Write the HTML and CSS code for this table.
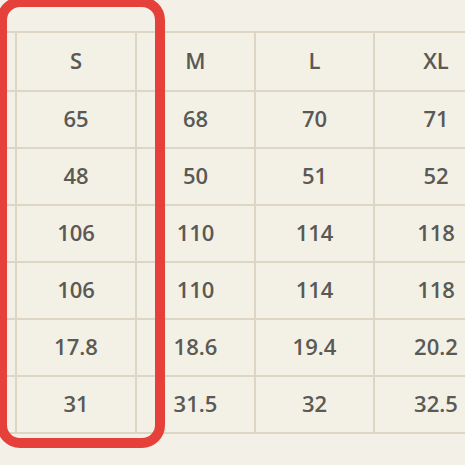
FILE: index.html
```html
<!DOCTYPE html>
<html>
<head>
<meta charset="utf-8">
<link rel="stylesheet" href="styles.css">
</head>
<body>
<div class="page">
  <div class="grid">
    <div class="cell"></div><div class="cell head">S</div><div class="cell head">M</div><div class="cell head">L</div><div class="cell head">XL</div>
    <div class="cell"></div><div class="cell">65</div><div class="cell">68</div><div class="cell">70</div><div class="cell">71</div>
    <div class="cell"></div><div class="cell">48</div><div class="cell">50</div><div class="cell">51</div><div class="cell">52</div>
    <div class="cell"></div><div class="cell">106</div><div class="cell">110</div><div class="cell">114</div><div class="cell">118</div>
    <div class="cell"></div><div class="cell">106</div><div class="cell">110</div><div class="cell">114</div><div class="cell">118</div>
    <div class="cell"></div><div class="cell">17.8</div><div class="cell">18.6</div><div class="cell">19.4</div><div class="cell">20.2</div>
    <div class="cell"></div><div class="cell">31</div><div class="cell">31.5</div><div class="cell">32</div><div class="cell">32.5</div>
  </div>
  <div class="highlight"></div>
</div>
</body>
</html>
```
FILE: styles.css
```css
html, body {
  margin: 0;
  padding: 0;
  background: #f3f0e7;
  overflow: hidden;
}
.page {
  position: relative;
  width: 465px;
  height: 465px;
  overflow: hidden;
  padding-top: 31px;
  box-sizing: border-box;
}
.grid {
  display: grid;
  grid-template-columns: 15px 118px 117px 117px 122px;
  grid-template-rows: 57px repeat(6, 55px);
  gap: 2px;
  padding: 2px 0;
  background: #ddd6c4;
  width: 497px;
}
.cell {
  background: #f3f0e6;
  display: flex;
  align-items: center;
  justify-content: center;
  padding-bottom: 4px;
  box-sizing: border-box;
  font-family: "Open Sans", "Noto Sans", sans-serif;
  font-weight: 600;
  font-size: 22px;
  color: #5a5954;
}
.highlight {
  position: absolute;
  left: -3px;
  top: -3px;
  width: 168px;
  height: 451px;
  box-sizing: border-box;
  border: 10px solid #e5413a;
  border-radius: 23px;
}
```
